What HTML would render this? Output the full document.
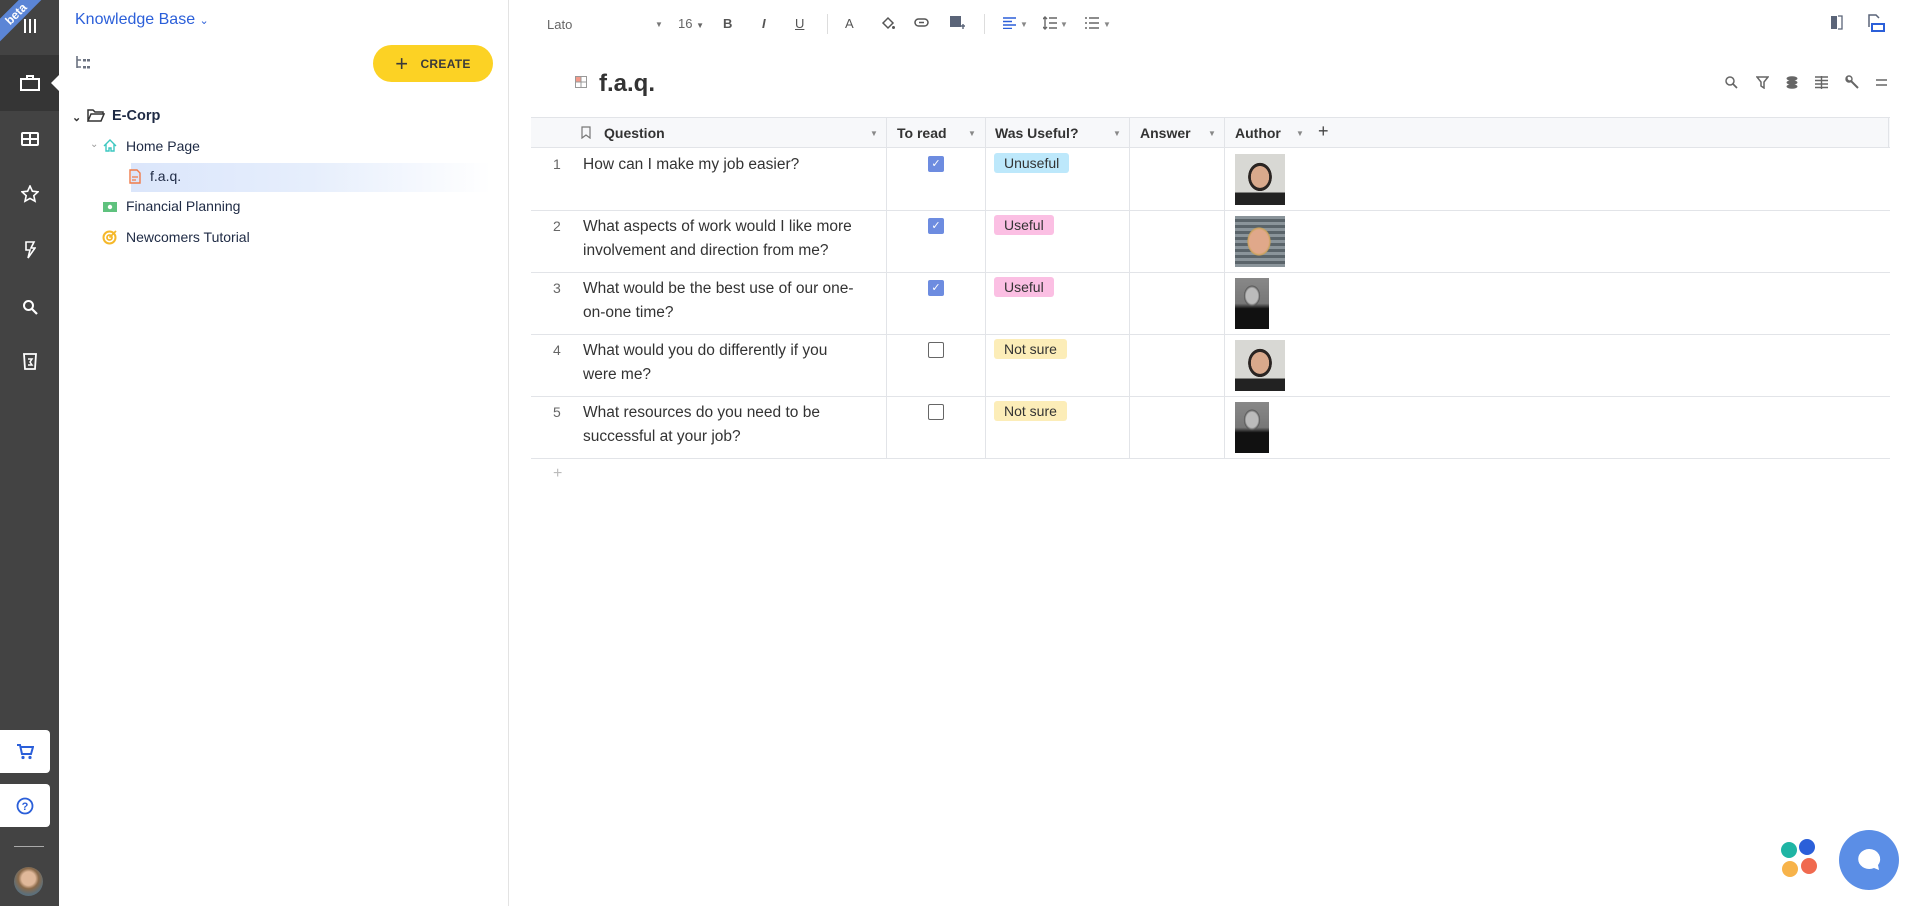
<!DOCTYPE html>
<html><head><meta charset="utf-8"><style>
*{box-sizing:border-box;margin:0;padding:0}
body{width:1918px;height:906px;overflow:hidden;background:#fff;font-family:"Liberation Sans",sans-serif;color:#333;position:relative}
.a{position:absolute}
.rail{left:0;top:0;width:59px;height:906px;background:#434343}
.ri{position:absolute;left:0;width:59px;display:flex;justify-content:center;align-items:center}
.side{left:59px;top:0;width:450px;height:906px;background:#fff;border-right:1px solid #e3e3e3}
.tree{font-size:14px;color:#1e2a44}
.car{position:absolute;font-size:8px;color:#888}
.q{position:absolute;left:583px;font-size:15.5px;line-height:24px;color:#333}
.n{position:absolute;left:553px;font-size:14px;color:#666}
.cb{position:absolute;left:928px;width:16px;height:16px;border-radius:2px}
.tag{position:absolute;left:994px;height:20px;padding:0 10px;font-size:14px;line-height:20px;border-radius:3px;color:#333}
.ti{position:absolute;top:16px;font-size:13px;color:#666}
</style></head><body>
<div class="a rail"></div>
<div class="a" style="left:0;top:55px;width:59px;height:56px;background:#353535"></div>
<div class="a" style="left:51px;top:75px;width:0;height:0;border-top:8px solid transparent;border-bottom:8px solid transparent;border-right:8px solid #fff"></div>
<div class="a" style="left:-16px;top:6px;width:64px;height:16px;background:#5b85d6;color:#fff;font-size:12px;font-weight:bold;text-align:center;line-height:16px;transform:rotate(-45deg)">beta</div>
<div class="ri" style="top:16px;height:20px"><svg width="14" height="16"><path d="M2 1v14M7 1v14M12 1v14" stroke="#fff" stroke-width="2"/></svg></div>
<div class="ri" style="top:72px;height:22px"><svg width="20" height="16"><rect x="1" y="4" width="18" height="11" fill="none" stroke="#fff" stroke-width="2"/><path d="M7 4V1h6v3" fill="none" stroke="#fff" stroke-width="2"/></svg></div>
<div class="ri" style="top:130px;height:18px"><svg width="18" height="14"><rect x="1" y="1" width="16" height="12" rx="1" fill="none" stroke="#fff" stroke-width="2"/><path d="M1 7h16M9 1v12" stroke="#fff" stroke-width="2"/></svg></div>
<div class="ri" style="top:185px;height:18px"><svg width="18" height="18"><path d="M9 1l2.4 5.2 5.6.6-4.2 3.8 1.2 5.6L9 13.4 4 16.2l1.2-5.6L1 6.8l5.6-.6z" fill="none" stroke="#fff" stroke-width="1.6"/></svg></div>
<div class="ri" style="top:240px;height:20px"><svg width="12" height="18"><path d="M2 1h8L7 7h4L4 17l2-8H2z" fill="none" stroke="#fff" stroke-width="1.6"/></svg></div>
<div class="ri" style="top:298px;height:18px"><svg width="16" height="16"><circle cx="6.5" cy="6.5" r="4.5" fill="none" stroke="#fff" stroke-width="2"/><path d="M10 10l5 5" stroke="#fff" stroke-width="2.2"/></svg></div>
<div class="ri" style="top:353px;height:18px"><svg width="16" height="18"><path d="M2 1h12l-1 15H3z" fill="none" stroke="#fff" stroke-width="1.8"/><path d="M6 6h4l-2 3 2 3H6" fill="none" stroke="#fff" stroke-width="1.5"/></svg></div>
<div class="a" style="left:0;top:730px;width:50px;height:43px;background:#fff;border-radius:0 4px 4px 0;display:flex;align-items:center;justify-content:center"><svg width="18" height="16"><path d="M1 1h3l2 9h9l2-7H5" fill="none" stroke="#2b5fd9" stroke-width="2"/><circle cx="7" cy="13.5" r="1.6" fill="#2b5fd9"/><circle cx="14" cy="13.5" r="1.6" fill="#2b5fd9"/></svg></div>
<div class="a" style="left:0;top:784px;width:50px;height:43px;background:#fff;border-radius:0 4px 4px 0;display:flex;align-items:center;justify-content:center"><svg width="18" height="18"><circle cx="9" cy="9" r="7.5" fill="none" stroke="#2b5fd9" stroke-width="1.8"/><text x="9" y="13" font-size="11" font-weight="bold" text-anchor="middle" fill="#2b5fd9" font-family="Liberation Sans">?</text></svg></div>
<div class="a" style="left:14px;top:846px;width:30px;height:1px;background:#aaa"></div>
<div class="a" style="left:14px;top:867px;width:29px;height:29px;border-radius:50%;background:radial-gradient(circle at 50% 40%,#e0b89a 0 30%,#8a6a4a 45%,#5c6f7a 70%)"></div>

<div class="a side"></div>
<div class="a" style="left:75px;top:11px;font-size:16px;color:#2b5fd9">Knowledge Base <span style="font-size:11px">&#8964;</span></div>
<svg class="a" style="left:76px;top:56px" width="16" height="14"><path d="M1 0v12M1 4h4M1 11h4" stroke="#6b7280" stroke-width="1.6"/><rect x="7" y="3" width="3" height="2.5" fill="#6b7280"/><rect x="11" y="3" width="3" height="2.5" fill="#6b7280"/><rect x="7" y="10" width="3" height="2.5" fill="#6b7280"/><rect x="11" y="10" width="3" height="2.5" fill="#6b7280"/></svg>
<div class="a" style="left:373px;top:45px;width:120px;height:37px;background:#fcd224;border-radius:19px;display:flex;align-items:center;justify-content:center;font-size:12px;font-weight:bold;color:#3a3a3a;letter-spacing:.3px"><span style="font-size:22px;font-weight:normal;margin-right:12px;line-height:1">+</span>CREATE</div>

<div class="a" style="left:131px;top:163px;width:360px;height:29px;background:linear-gradient(90deg,#dbe6fb 0%,#e6eefc 50%,#fff 100%)"></div>
<div class="a tree" style="left:72px;top:108px;font-weight:bold"><span style="font-size:11px;color:#333">&#8964;</span></div>
<svg class="a" style="left:87px;top:109px" width="18" height="13"><path d="M1 12V1h5l2 2h8v2M1 12l3-7h13l-3 7z" fill="none" stroke="#333" stroke-width="1.5"/></svg>
<div class="a tree" style="left:112px;top:108px;font-weight:bold;font-size:14.5px">E-Corp</div>
<div class="a" style="left:90px;top:139px;font-size:10px;color:#999">&#8964;</div>
<svg class="a" style="left:103px;top:139px" width="14" height="13"><path d="M1 7L7 1l6 6M3 5v7h3V9h2v3h3V5" fill="none" stroke="#3cc7c0" stroke-width="1.4"/></svg>
<div class="a tree" style="left:126px;top:138px">Home Page</div>
<svg class="a" style="left:129px;top:169px" width="12" height="15"><path d="M1 1h7l3 3v10H1z" fill="none" stroke="#f07b4a" stroke-width="1.4"/><path d="M3 8h6M3 11h4" stroke="#f07b4a" stroke-width="1.2"/></svg>
<div class="a tree" style="left:150px;top:168px">f.a.q.</div>
<svg class="a" style="left:103px;top:202px" width="14" height="10"><rect x="0" y="0" width="14" height="10" fill="#5fc27e"/><circle cx="7" cy="5" r="2.2" fill="#fff"/></svg>
<div class="a tree" style="left:126px;top:198px">Financial Planning</div>
<svg class="a" style="left:102px;top:230px" width="15" height="15"><circle cx="7.5" cy="7.5" r="6" fill="none" stroke="#f5b82a" stroke-width="2"/><circle cx="7.5" cy="7.5" r="2.5" fill="none" stroke="#f5b82a" stroke-width="1.8"/><path d="M7.5 7.5L14 1" stroke="#f5b82a" stroke-width="1.8"/></svg>
<div class="a tree" style="left:126px;top:229px">Newcomers Tutorial</div>

<!-- toolbar -->
<div class="ti" style="left:547px;top:17px">Lato</div>
<div class="ti" style="left:655px;font-size:8px;top:20px;color:#777">&#9660;</div>
<div class="ti" style="left:678px;top:16px">16 <span style="font-size:8px">&#9660;</span></div>
<div class="ti" style="left:723px;font-weight:bold;color:#555">B</div>
<div class="ti" style="left:762px;font-style:italic;font-weight:bold;color:#555">I</div>
<div class="ti" style="left:795px;text-decoration:underline;color:#555">U</div>
<div class="a" style="left:827px;top:14px;width:1px;height:20px;background:#ddd"></div>
<div class="ti" style="left:845px;color:#555">A</div>
<svg class="a" style="left:881px;top:16px" width="14" height="14"><path d="M2 7l5-5 5 5-5 5z" fill="none" stroke="#555" stroke-width="1.5"/><circle cx="12.5" cy="11.5" r="1.5" fill="#555"/></svg>
<svg class="a" style="left:914px;top:18px" width="15" height="9"><rect x="1" y="1" width="13" height="7" rx="3.5" fill="none" stroke="#555" stroke-width="1.5"/><path d="M5 4.5h5" stroke="#555" stroke-width="1.5"/></svg>
<svg class="a" style="left:950px;top:15px" width="15" height="15"><rect x="0" y="1" width="11" height="11" fill="#5a6478"/><path d="M11 11h4M13 9v5" stroke="#5a6478" stroke-width="1.4"/></svg>
<div class="a" style="left:984px;top:14px;width:1px;height:20px;background:#ddd"></div>
<svg class="a" style="left:1003px;top:17px" width="14" height="12"><path d="M0 1h13M0 4.5h9M0 8h13M0 11.5h9" stroke="#2b5fd9" stroke-width="1.5"/></svg>
<div class="ti" style="left:1020px;font-size:8px;top:20px;color:#888">&#9660;</div>
<svg class="a" style="left:1043px;top:16px" width="14" height="14"><path d="M2 1v12M0 3l2-2 2 2M0 11l2 2 2-2M6 2h8M6 7h8M6 12h8" fill="none" stroke="#666" stroke-width="1.4"/></svg>
<div class="ti" style="left:1060px;font-size:8px;top:20px;color:#888">&#9660;</div>
<svg class="a" style="left:1085px;top:17px" width="14" height="12"><path d="M0 1h2M4 1h10M0 6h2M4 6h10M0 11h2M4 11h10" stroke="#666" stroke-width="1.5"/></svg>
<div class="ti" style="left:1103px;font-size:8px;top:20px;color:#888">&#9660;</div>
<svg class="a" style="left:1831px;top:15px" width="12" height="15"><rect x="0" y="1" width="6" height="13" fill="#5a6478"/><path d="M7 1h4v13H7" fill="none" stroke="#5a6478" stroke-width="1.3"/></svg>
<svg class="a" style="left:1868px;top:14px" width="17" height="18"><path d="M1 13V1h7l3 3" fill="none" stroke="#5a6478" stroke-width="1.5"/><rect x="4" y="10" width="12" height="7" fill="none" stroke="#2b5fd9" stroke-width="2"/></svg>

<!-- title -->
<svg class="a" style="left:575px;top:76px" width="12" height="12"><rect x=".5" y=".5" width="11" height="11" fill="none" stroke="#999"/><rect x="1" y="1" width="5" height="5" fill="#f39a8a"/><path d="M6 0v12M0 6h12" stroke="#999"/></svg>
<div class="a" style="left:599px;top:70px;font-size:24px;font-weight:bold;color:#333">f.a.q.</div>
<svg class="a" style="left:1725px;top:76px" width="13" height="13"><circle cx="5" cy="5" r="4" fill="none" stroke="#666" stroke-width="1.5"/><path d="M8 8l4 4" stroke="#666" stroke-width="1.7"/></svg>
<svg class="a" style="left:1756px;top:76px" width="13" height="13"><path d="M1 1h11L8 6v6l-3-2V6z" fill="none" stroke="#666" stroke-width="1.5"/></svg>
<svg class="a" style="left:1786px;top:76px" width="12" height="13"><ellipse cx="6" cy="2.5" rx="5.5" ry="2.3" fill="#666"/><ellipse cx="6" cy="6.5" rx="5.5" ry="2.3" fill="#666"/><ellipse cx="6" cy="10.5" rx="5.5" ry="2.3" fill="#666"/></svg>
<svg class="a" style="left:1815px;top:76px" width="13" height="13"><path d="M0 1h13M0 4.5h13M0 8h13M0 11.5h13M6.5 0v13" stroke="#666" stroke-width="1.4"/></svg>
<svg class="a" style="left:1845px;top:75px" width="15" height="15"><path d="M2 2a3 3 0 0 0 4 4l7 7" fill="none" stroke="#666" stroke-width="2"/><circle cx="4" cy="4" r="3" fill="none" stroke="#666" stroke-width="1.4"/></svg>
<svg class="a" style="left:1876px;top:79px" width="11" height="7"><path d="M0 1h11M0 6h11" stroke="#666" stroke-width="1.5"/></svg>

<!-- table -->
<div class="a" style="left:531px;top:117px;width:1359px;height:31px;background:#f7f8fa;border-top:1px solid #e2e4e8;border-bottom:1px solid #e2e4e8"></div>
<div class="a" style="left:1888px;top:117px;width:1px;height:31px;background:#e2e4e8"></div>
<svg class="a" style="left:581px;top:126px" width="10" height="13"><path d="M1 1h8v11L5 9 1 12z" fill="none" stroke="#777" stroke-width="1.2"/></svg>
<div class="a" style="left:604px;top:125px;font-size:14px;font-weight:bold">Question</div>
<div class="car" style="left:870px;top:129px">&#9660;</div>
<div class="a" style="left:897px;top:125px;font-size:14px;font-weight:bold">To read</div>
<div class="car" style="left:968px;top:129px">&#9660;</div>
<div class="a" style="left:995px;top:125px;font-size:14px;font-weight:bold">Was Useful?</div>
<div class="car" style="left:1113px;top:129px">&#9660;</div>
<div class="a" style="left:1140px;top:125px;font-size:14px;font-weight:bold">Answer</div>
<div class="car" style="left:1208px;top:129px">&#9660;</div>
<div class="a" style="left:1235px;top:125px;font-size:14px;font-weight:bold">Author</div>
<div class="car" style="left:1296px;top:129px">&#9660;</div>
<div class="a" style="left:1318px;top:121px;font-size:18px;color:#444">+</div>

<div class="a" style="left:886px;top:117px;width:1px;height:342px;background:#e2e4e8"></div>
<div class="a" style="left:985px;top:117px;width:1px;height:342px;background:#e2e4e8"></div>
<div class="a" style="left:1129px;top:117px;width:1px;height:342px;background:#e2e4e8"></div>
<div class="a" style="left:1224px;top:117px;width:1px;height:342px;background:#e2e4e8"></div>
<div class="a" style="left:531px;top:210px;width:1359px;height:1px;background:#e2e4e8"></div>
<div class="a" style="left:531px;top:272px;width:1359px;height:1px;background:#e2e4e8"></div>
<div class="a" style="left:531px;top:334px;width:1359px;height:1px;background:#e2e4e8"></div>
<div class="a" style="left:531px;top:396px;width:1359px;height:1px;background:#e2e4e8"></div>
<div class="a" style="left:531px;top:458px;width:1359px;height:1px;background:#e2e4e8"></div>

<div class="n" style="top:156px">1</div><div class="q" style="top:153px">How can I make my job easier?</div>
<div class="n" style="top:218px">2</div><div class="q" style="top:215px">What aspects of work would I like more<br>involvement and direction from me?</div>
<div class="n" style="top:280px">3</div><div class="q" style="top:277px">What would be the best use of our one-<br>on-one time?</div>
<div class="n" style="top:342px">4</div><div class="q" style="top:339px">What would you do differently if you<br>were me?</div>
<div class="n" style="top:404px">5</div><div class="q" style="top:401px">What resources do you need to be<br>successful at your job?</div>

<div class="cb" style="top:156px;background:#6d8ce0;color:#fff;font-size:11px;text-align:center;line-height:16px">&#10003;</div>
<div class="cb" style="top:218px;background:#6d8ce0;color:#fff;font-size:11px;text-align:center;line-height:16px">&#10003;</div>
<div class="cb" style="top:280px;background:#6d8ce0;color:#fff;font-size:11px;text-align:center;line-height:16px">&#10003;</div>
<div class="cb" style="top:342px;border:1.5px solid #666"></div>
<div class="cb" style="top:404px;border:1.5px solid #666"></div>

<div class="tag" style="top:153px;background:#bde8fb">Unuseful</div>
<div class="tag" style="top:215px;background:#fbbfe3">Useful</div>
<div class="tag" style="top:277px;background:#fbbfe3">Useful</div>
<div class="tag" style="top:339px;background:#fcedb8">Not sure</div>
<div class="tag" style="top:401px;background:#fcedb8">Not sure</div>

<div class="a" style="left:1235px;top:154px;width:50px;height:51px;background:radial-gradient(ellipse 30% 35% at 50% 45%,#d9a98c 60%,#2a2422 62%,#2a2422 78%,transparent 80%),linear-gradient(#d8d8d4,#d8d8d4 75%,#222 76%)"></div>
<div class="a" style="left:1235px;top:216px;width:50px;height:51px;background:radial-gradient(ellipse 32% 38% at 48% 50%,#e0a88a 60%,#c9a25a 70%,transparent 75%),repeating-linear-gradient(#8a949a 0 3px,#5a646a 3px 6px)"></div>
<div class="a" style="left:1235px;top:278px;width:34px;height:51px;background:radial-gradient(ellipse 35% 30% at 50% 35%,#bbb 50%,#555 65%,transparent 70%),linear-gradient(#888,#777 50%,#111 60%)"></div>
<div class="a" style="left:1235px;top:340px;width:50px;height:51px;background:radial-gradient(ellipse 30% 35% at 50% 45%,#d9a98c 60%,#2a2422 62%,#2a2422 78%,transparent 80%),linear-gradient(#d8d8d4,#d8d8d4 75%,#222 76%)"></div>
<div class="a" style="left:1235px;top:402px;width:34px;height:51px;background:radial-gradient(ellipse 35% 30% at 50% 35%,#bbb 50%,#555 65%,transparent 70%),linear-gradient(#888,#777 50%,#111 60%)"></div>

<div class="a" style="left:553px;top:465px;font-size:16px;color:#bbb">+</div>

<div class="a" style="left:1781px;top:842px;width:16px;height:16px;border-radius:50%;background:#1fb5a4"></div>
<div class="a" style="left:1799px;top:839px;width:16px;height:16px;border-radius:50%;background:#2b5fd9"></div>
<div class="a" style="left:1782px;top:861px;width:16px;height:16px;border-radius:50%;background:#f7b34a"></div>
<div class="a" style="left:1801px;top:858px;width:16px;height:16px;border-radius:50%;background:#f06a4f"></div>
<div class="a" style="left:1839px;top:830px;width:60px;height:60px;border-radius:50%;background:#5b8ee6;display:flex;align-items:center;justify-content:center"><svg width="28" height="28"><path d="M14 3a11 10 0 1 0 5 19l5 2-1-5A11 10 0 0 0 14 3z" fill="#fff"/></svg></div>
</body></html>
